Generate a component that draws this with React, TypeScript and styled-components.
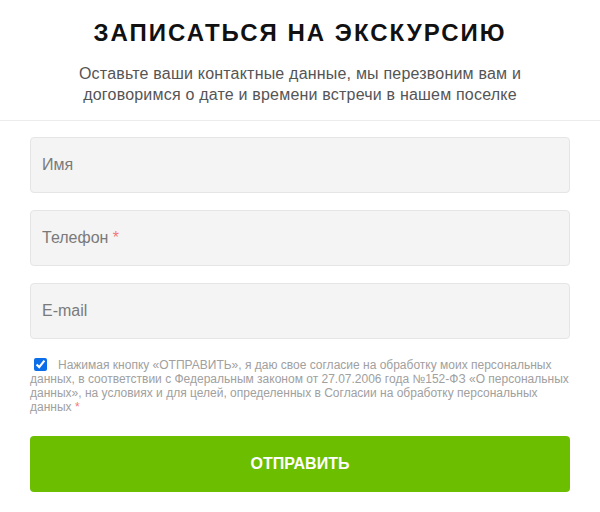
import styled, {createGlobalStyle} from "styled-components";

const GlobalStyle = createGlobalStyle`
    body {
        margin: 0;
        background: #ffffff;
        font-family: "Liberation Sans", Arial, sans-serif;
    }
`

const fields = [
    {placeholder: "Имя", required: false},
    {placeholder: "Телефон", required: true},
    {placeholder: "E-mail", required: false},
]

export default function App() {
    return (
        <>
            <GlobalStyle/>
            <StyledPage>
                <StyledHeader>
                    <Title>ЗАПИСАТЬСЯ НА ЭКСКУРСИЮ</Title>
                    <Subtitle>
                        Оставьте ваши контактные данные, мы перезвоним вам и
                        <br/>
                        договоримся о дате и времени встречи в нашем поселке
                    </Subtitle>
                </StyledHeader>
                <StyledForm onSubmit={(e) => e.preventDefault()}>
                    {fields.map((f) => (
                        <Field key={f.placeholder}>
                            <Input type="text"/>
                            <Placeholder>
                                {f.placeholder}
                                {f.required && <Star> *</Star>}
                            </Placeholder>
                        </Field>
                    ))}
                    <Agreement>
                        <Checkbox type="checkbox" defaultChecked/>
                        Нажимая кнопку «ОТПРАВИТЬ», я даю свое согласие на обработку моих персональных
                        данных, в соответствии с Федеральным законом от 27.07.2006 года №152-ФЗ «О персональных
                        данных», на условиях и для целей, определенных в Согласии на обработку персональных
                        данных <Star>*</Star>
                    </Agreement>
                    <SubmitButton type="submit">ОТПРАВИТЬ</SubmitButton>
                </StyledForm>
            </StyledPage>
        </>
    );
}

const StyledPage = styled.div`
    width: 600px;
    height: 512px;
    overflow: hidden;
`
const StyledHeader = styled.div`
    display: flex;
    flex-direction: column;
    align-items: center;
    padding-top: 19px;
    height: 121px;
    box-sizing: border-box;
    border-bottom: 1px solid #ececec;
`
const Title = styled.h2`
    margin: 0;
    font-size: 24px;
    line-height: 28px;
    font-weight: 700;
    letter-spacing: 2px;
    color: #111111;
`
const Subtitle = styled.p`
    margin: 16px 0 0;
    font-size: 16px;
    line-height: 21px;
    letter-spacing: 0.2px;
    color: #555555;
    text-align: center;
`
const StyledForm = styled.form`
    display: flex;
    flex-direction: column;
    width: 540px;
    margin: 16px auto 0;
    gap: 17px;
`
const Field = styled.label`
    position: relative;
    display: block;
    height: 56px;
`
const Input = styled.input`
    width: 100%;
    height: 100%;
    box-sizing: border-box;
    background: #f4f4f4;
    border: 1px solid #e5e5e5;
    border-radius: 4px;
    outline: none;
    font: inherit;
    padding: 0 12px;
`
const Placeholder = styled.span`
    position: absolute;
    left: 12px;
    top: 50%;
    transform: translateY(-50%);
    font-size: 16px;
    color: #7a7a7a;
    pointer-events: none;
`
const Star = styled.span`
    color: #f07a7a;
`
const Agreement = styled.label`
    display: block;
    margin-top: 2px;
    font-size: 12px;
    line-height: 14px;
    color: #a0a0a0;
`
const Checkbox = styled.input`
    width: 13px;
    height: 13px;
    margin: 0 11px 0 4px;
    vertical-align: -2px;
    accent-color: #0b6ee8;
`
const SubmitButton = styled.button`
    height: 56px;
    margin-top: 5px;
    border: none;
    border-radius: 4px;
    background: #6bbe00;
    color: #ffffff;
    font-family: inherit;
    font-size: 16px;
    font-weight: 700;
    cursor: pointer;
`
